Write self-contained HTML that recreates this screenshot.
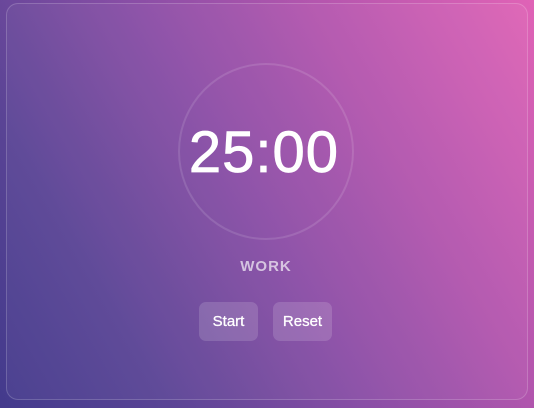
<!DOCTYPE html>
<html><head><meta charset="utf-8"><style>
html,body{margin:0;padding:0;width:534px;height:408px;overflow:hidden}
body{background:linear-gradient(60deg,#433a8c 0%,#5a4495 22%,#8a4ea6 48%,#b556ae 72%,#e063b6 100%);font-family:"Liberation Sans",sans-serif;position:relative}
.card{position:absolute;left:6px;top:3px;width:522px;height:397px;border-radius:12px;border:1px solid rgba(255,255,255,0.18);background:rgba(255,255,255,0.04);box-sizing:border-box}
.circle{position:absolute;left:178px;top:63px;width:176px;height:177px;border-radius:50%;border:2px solid rgba(255,255,255,0.12);box-sizing:border-box}
.time{position:absolute;left:0;width:528px;top:124px;text-align:center;color:#fff;font-size:58px;line-height:58px;letter-spacing:1px;-webkit-text-stroke:0.8px #fff}
.work{position:absolute;left:0;width:532px;top:257px;text-align:center;color:rgba(255,255,255,0.65);font-size:15px;font-weight:bold;letter-spacing:1px;line-height:20px}
.btn{position:absolute;top:302px;width:59px;height:39px;border-radius:7px;background:rgba(255,255,255,0.15);color:#fff;font-size:15px;line-height:39px;text-align:center;-webkit-text-stroke:0.3px #fff}
</style></head><body>
<div class="card"></div>
<div class="circle"></div>
<div class="time">25:00</div>
<div class="work">WORK</div>
<div class="btn" style="left:199px">Start</div>
<div class="btn" style="left:273px">Reset</div>
</body></html>
